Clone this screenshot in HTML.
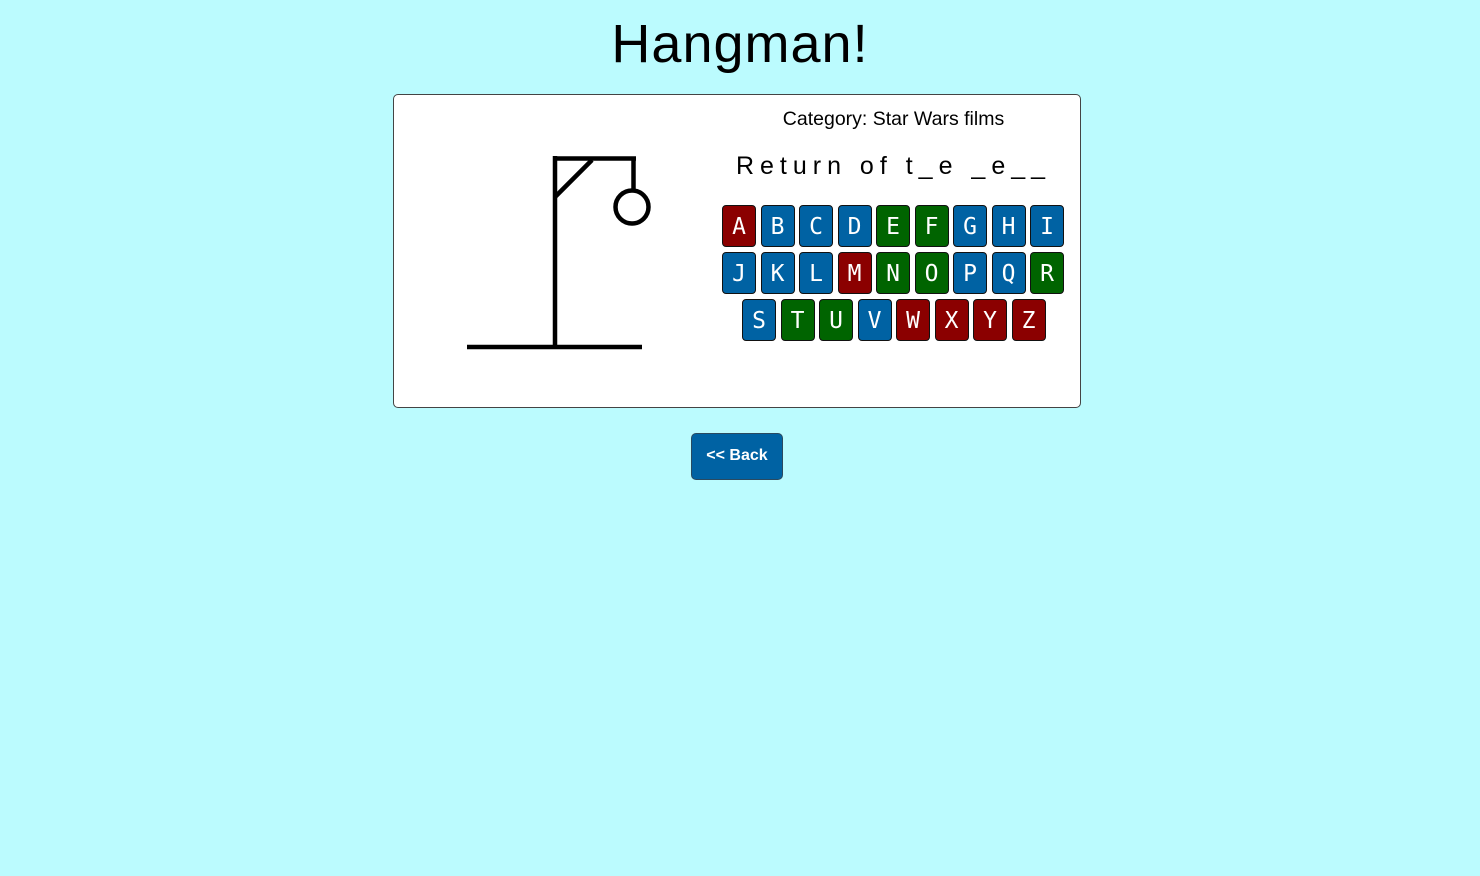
<!DOCTYPE html>
<html><head><style>
body{margin:0;background:#bbfbfe;font-family:"Liberation Sans",sans-serif;width:1480px;height:876px;position:relative;overflow:hidden}
h1{position:absolute;top:14px;left:0;width:1480px;text-align:center;margin:0;font-weight:normal;font-size:54px;line-height:60px;color:#000;letter-spacing:1px}
.card{position:absolute;left:393px;top:94px;width:686px;height:312px;background:#fff;border:1px solid #444;border-radius:5px}
.cat{position:absolute;left:706px;top:105px;width:375px;text-align:center;font-size:19.5px;line-height:28px}
.word{position:absolute;left:706px;top:150px;width:375px;text-align:center;font-size:25px;letter-spacing:6px;line-height:32px}
.k{position:absolute;width:32px;height:40px;border:1px solid #111;border-radius:4px;color:#fff;font-family:"DejaVu Sans Mono",monospace;font-size:23px;line-height:42px;text-align:center}
.r{background:#8b0000}.b{background:#0062a3}.g{background:#006400}
.back{position:absolute;left:691px;top:433px;width:90px;height:45px;background:#0062a3;border:1px solid #2a4a60;border-radius:5px;color:#fff;font-weight:bold;font-size:16px;line-height:44px;text-align:center}
</style></head><body>
<h1>Hangman!</h1>
<div class="card"></div>
<svg style="position:absolute;left:0;top:0" width="1480" height="876">
<g stroke="#000" stroke-width="4.5" fill="none">
<line x1="467" y1="347" x2="642" y2="347"/>
<line x1="555" y1="156" x2="555" y2="347"/>
<line x1="553" y1="158.5" x2="636" y2="158.5"/>
<line x1="633.5" y1="157" x2="633.5" y2="190"/>
<line x1="555" y1="197" x2="592" y2="160"/>
<circle cx="632" cy="207" r="16.5"/>
</g></svg>
<div class="cat">Category: Star Wars films</div>
<div class="word">Return of t_e _e__</div>
<div class="k r" style="left:722px;top:205px">A</div>
<div class="k b" style="left:760.5px;top:205px">B</div>
<div class="k b" style="left:799px;top:205px">C</div>
<div class="k b" style="left:837.5px;top:205px">D</div>
<div class="k g" style="left:876px;top:205px">E</div>
<div class="k g" style="left:914.5px;top:205px">F</div>
<div class="k b" style="left:953px;top:205px">G</div>
<div class="k b" style="left:991.5px;top:205px">H</div>
<div class="k b" style="left:1030px;top:205px">I</div>
<div class="k b" style="left:722px;top:252px">J</div>
<div class="k b" style="left:760.5px;top:252px">K</div>
<div class="k b" style="left:799px;top:252px">L</div>
<div class="k r" style="left:837.5px;top:252px">M</div>
<div class="k g" style="left:876px;top:252px">N</div>
<div class="k g" style="left:914.5px;top:252px">O</div>
<div class="k b" style="left:953px;top:252px">P</div>
<div class="k b" style="left:991.5px;top:252px">Q</div>
<div class="k g" style="left:1030px;top:252px">R</div>
<div class="k b" style="left:742px;top:299px">S</div>
<div class="k g" style="left:780.5px;top:299px">T</div>
<div class="k g" style="left:819px;top:299px">U</div>
<div class="k b" style="left:857.5px;top:299px">V</div>
<div class="k r" style="left:896px;top:299px">W</div>
<div class="k r" style="left:934.5px;top:299px">X</div>
<div class="k r" style="left:973px;top:299px">Y</div>
<div class="k r" style="left:1011.5px;top:299px">Z</div>
<div class="back">&lt;&lt; Back</div>
</body></html>
